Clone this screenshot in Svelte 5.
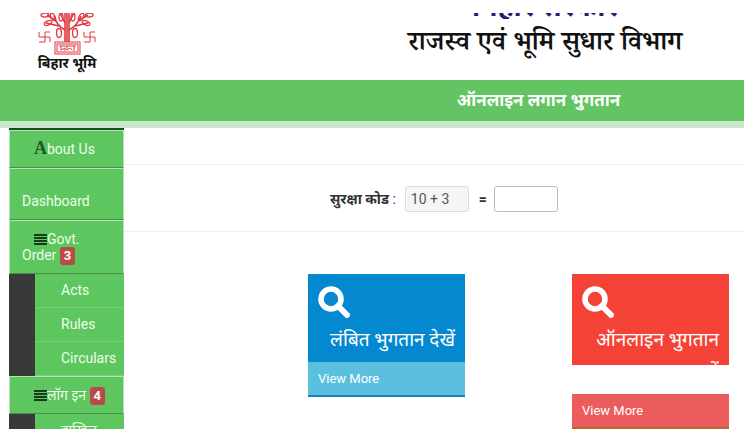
<script>
    let answer = "";

    const menu = [
        { label: "About Us", icon: "letter", items: [] },
        { label: "Dashboard", icon: "", items: [] },
        { label: "Govt. Order", icon: "bars", count: 3, items: ["Acts", "Rules", "Circulars"] },
        { label: "लॉग इन", icon: "bars", count: 4, items: ["दाखिल"] },
    ];

    const tiles = [
        { title: "लंबित भुगतान देखें", color: "blue" },
        { title: "ऑनलाइन भुगतान करें", color: "red" },
    ];
</script>

<div class="page">
    <header>
        <div class="brand">
            <svg class="emblem" viewBox="0 0 60 42" fill="none" stroke="#e0393f">
                <path d="M28 29V0M32 29V0M30 29V0" stroke-width="1.6" />
                <path d="M28 17Q20 13 17 3M32 17Q40 13 44 3M28 10L23 0M32 10L37 0M22 13L9 10M38 13L51 10M19 8L10 2M41 8L51 2" stroke-width="1.6" />
                <g stroke-width="1.3">
                    <ellipse cx="8" cy="2" rx="4" ry="2" />
                    <ellipse cx="52" cy="2" rx="4" ry="2" />
                    <ellipse cx="11" cy="10" rx="4" ry="2" transform="rotate(-25 11 10)" />
                    <ellipse cx="49" cy="10" rx="4" ry="2" transform="rotate(25 49 10)" />
                    <ellipse cx="16" cy="4" rx="2" ry="4" transform="rotate(-30 16 4)" />
                    <ellipse cx="44" cy="4" rx="2" ry="4" transform="rotate(30 44 4)" />
                    <ellipse cx="22" cy="20" rx="2.5" ry="4.5" />
                    <ellipse cx="38" cy="20" rx="2.5" ry="4.5" />
                    <ellipse cx="24" cy="4" rx="2" ry="4" />
                    <ellipse cx="36" cy="4" rx="2" ry="4" />
                </g>
                <g stroke-width="1">
                    <path d="M2 19V24H13V29M8 19H13M8 19V29H2" />
                    <path d="M47 19V24H58V29M53 19H58M53 19V29H47" />
                    <rect x="18" y="29" width="25" height="12" />
                    <rect x="20" y="31" width="21" height="8" />
                    <path d="M22 33H39M24 33V37L28 35V38M30 33V37Q34 34 35 37M37 33V38" />
                </g>
            </svg>
            <span class="brand-name">बिहार भूमि</span>
        </div>
        <div class="department">
            <div class="state"><span>बिहार सरकार</span></div>
            <h1>राजस्व एवं भूमि सुधार विभाग</h1>
        </div>
    </header>

    <div class="banner"><h2>ऑनलाइन लगान भुगतान</h2></div>

    <div class="layout">
        <nav>
            {#each menu as entry}
                <a href="#top" class="entry" class:plain={!entry.icon}>
                    {#if entry.icon === "letter"}
                        <span class="indent"><b class="initial">A</b>bout Us</span>
                    {:else if entry.icon === "bars"}
                        <svg class="bars" viewBox="0 0 13 12"><path d="M0 1H13M0 4H13M0 7H13M0 10H13" stroke="#173c1b" stroke-width="2" /></svg>{entry.label}
                        <span class="count">{entry.count}</span>
                    {:else}
                        {entry.label}
                    {/if}
                </a>
                {#if entry.items.length}
                    <ul>
                        {#each entry.items as item}
                            <li><a href="#top">{item}</a></li>
                        {/each}
                    </ul>
                {/if}
            {/each}
        </nav>

        <main>
            <form>
                <label for="sum">सुरक्षा कोड <span>:</span></label>
                <input id="sum" class="sum" value="10 + 3" readonly />
                <label for="answer" class="equals">=</label>
                <input id="answer" bind:value={answer} />
            </form>

            <div class="tiles">
                {#each tiles as tile}
                    <section class="tile {tile.color}">
                        <div class="tile-body">
                            <svg viewBox="0 0 32 32" fill="none" stroke="#fff">
                                <circle cx="13" cy="13" r="10" stroke-width="5.6" />
                                <path d="M20 20L29 29" stroke-width="6" stroke-linecap="round" />
                            </svg>
                            <p>{tile.title}</p>
                        </div>
                        <a href="#top">View More</a>
                    </section>
                {/each}
            </div>
        </main>
    </div>
</div>

<style>
    :global(body) {
        background: #fff;
        overflow: hidden;
    }

    .page {
        height: 100vh;
        overflow: hidden;
        padding-right: 4px;
        font-family: Roboto, "Noto Sans Devanagari", "Noto Sans", sans-serif;
        font-size: 13px;
        color: #333;
    }

    header {
        display: flex;
        height: 67px;
        padding-top: 13px;
    }

    .brand {
        display: flex;
        flex-direction: column;
        align-items: center;
        width: 134px;
    }

    .emblem {
        width: 60px;
        height: 42px;
        flex: none;
    }

    .brand-name {
        font-size: 14px;
        line-height: 16px;
        font-weight: bold;
        color: #111;
    }

    .department {
        flex: 1;
        padding: 0 2px 0 214px;
        text-align: center;
    }

    .state {
        display: flex;
        flex-direction: column;
        justify-content: flex-end;
        align-items: center;
        height: 6px;
        overflow: hidden;
        font-size: 28px;
        line-height: 24px;
        font-weight: bold;
        color: #2b1a70;
    }

    h1 {
        margin: 0;
        font-family: "Noto Serif Devanagari", "Noto Sans Devanagari", "Noto Sans", serif;
        font-size: 27px;
        line-height: 54px;
        font-weight: 600;
        color: #111;
    }

    .banner {
        padding-left: 333px;
        background: #62c462;
        border-bottom: 7px solid #cbe5cb;
        text-align: center;
    }

    h2 {
        margin: 0;
        font-size: 17px;
        line-height: 41px;
        color: #fff;
    }

    .layout {
        display: flex;
    }

    nav {
        flex: none;
        width: 115px;
        margin-left: 9px;
        border-top: 2px solid #174d1e;
        box-sizing: border-box;
        background: #5ec65e;
    }

    a {
        color: #eaffea;
        text-decoration: none;
    }

    .entry {
        display: block;
        padding: 10px 12px;
        border: 1px solid #b5e5b5;
        border-bottom-color: #4b8b4b;
        font-size: 14px;
        line-height: 16px;
    }

    .entry.plain {
        padding-top: 24px;
    }

    .indent {
        padding-left: 12px;
    }

    .initial {
        font-family: "Liberation Serif", serif;
        font-size: 18px;
        line-height: 14px;
        color: #1d5a24;
    }

    .bars {
        width: 13px;
        height: 12px;
        margin-left: 12px;
        vertical-align: -2px;
    }

    .count {
        display: inline-block;
        margin: -2px 0;
        padding: 0 4px;
        border-radius: 3px;
        background: #b94a48;
        color: #fff;
        font-size: 13px;
        line-height: 18px;
        font-weight: bold;
    }

    ul {
        margin: 0;
        padding: 0 0 0 26px;
        list-style: none;
        background: #393939;
    }

    li a {
        display: block;
        padding: 8px 0 8px 26px;
        border-bottom: 1px solid #7bcc7b;
        background: #5ec65e;
        font-size: 14px;
        line-height: 17px;
    }

    main {
        flex: 1;
        padding-top: 36px;
    }

    form {
        display: flex;
        align-items: center;
        padding: 21px 0 19px 206px;
        border: solid #eee;
        border-width: 1px 0;
    }

    label {
        font-size: 14px;
        line-height: 20px;
        font-weight: bold;
    }

    label span {
        font-weight: normal;
    }

    input {
        box-sizing: border-box;
        width: 64px;
        height: 26px;
        padding: 0 5px;
        border: 1px solid #bbb;
        border-radius: 3px;
        background: #fff;
        font-family: inherit;
        font-size: 14px;
        color: #555;
    }

    .sum {
        margin-left: 9px;
        border-color: #ddd;
        background: #f5f5f5;
    }

    .equals {
        padding: 0 7px 0 10px;
    }

    .tiles {
        display: grid;
        grid-template-columns: 1fr 1fr;
        align-items: start;
        gap: 107px;
        padding: 42px 15px 0 184px;
    }

    .tile {
        color: #fff;
    }

    .tile-body {
        height: 88px;
        box-sizing: border-box;
        padding: 12px 10px 0;
    }

    .tile svg {
        display: block;
        width: 32px;
        height: 32px;
    }

    .tile p {
        margin: 6px 0 0;
        font-size: 19px;
        line-height: 32px;
        text-align: right;
    }

    .tile a {
        display: block;
        padding: 0 10px;
        font-size: 13px;
        line-height: 33px;
        color: #fff;
    }

    .blue .tile-body {
        background: #0488d0;
    }

    .blue a {
        background: #5bc0de;
        border-bottom: 2px solid #1583b5;
    }

    .red .tile-body {
        height: 91px;
        margin-bottom: 29px;
        background: #f44336;
    }

    .red a {
        background: #ed5c5c;
        border-bottom: 2px solid #a9702c;
    }
</style>
